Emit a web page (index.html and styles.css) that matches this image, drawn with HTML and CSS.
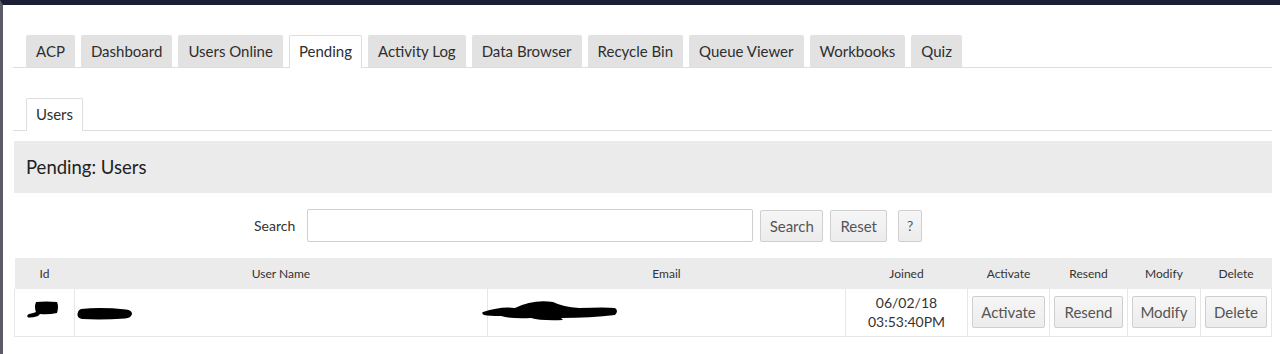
FILE: index.html
```html
<!DOCTYPE html>
<html lang="en">
<head>
<meta charset="utf-8">
<title>ACP - Pending Users</title>
<link rel="stylesheet" href="styles.css">
</head>
<body>
<div class="frame">
  <div class="content">
    <ul class="tabs">
      <li class="tab">ACP</li>
      <li class="tab">Dashboard</li>
      <li class="tab">Users Online</li>
      <li class="tab active">Pending</li>
      <li class="tab">Activity Log</li>
      <li class="tab">Data Browser</li>
      <li class="tab">Recycle Bin</li>
      <li class="tab">Queue Viewer</li>
      <li class="tab">Workbooks</li>
      <li class="tab">Quiz</li>
    </ul>
    <ul class="tabs subtabs">
      <li class="tab active">Users</li>
    </ul>
    <div class="panel-heading">Pending: Users</div>
    <form class="search-row">
      <label class="search-label">Search</label>
      <input class="search-input" type="text">
      <button class="btn btn-search" type="button">Search</button>
      <button class="btn btn-reset" type="button">Reset</button>
      <button class="btn btn-help" type="button">?</button>
    </form>
    <table class="grid">
      <colgroup>
        <col class="c-id"><col class="c-name"><col class="c-email"><col class="c-joined">
        <col class="c-act"><col class="c-resend"><col class="c-mod"><col class="c-del">
      </colgroup>
      <thead>
        <tr><th>Id</th><th>User Name</th><th>Email</th><th>Joined</th><th>Activate</th><th>Resend</th><th>Modify</th><th>Delete</th></tr>
      </thead>
      <tbody>
        <tr>
          <td class="redact-cell">
            <svg class="redact r-id" width="34" height="18" viewBox="0 0 34 18"><path d="M10 1 Q20 0 31 1 Q33 6 31 12 Q22 14 14 13 L12 15 Q6 17 2 16.5 Q0 14.5 3 13 Q8 12 10 11 Q8 6 10 1 Z" fill="#000"/></svg>
          </td>
          <td class="redact-cell">
            <svg class="redact r-name" width="58" height="14" viewBox="0 0 58 14"><path d="M5 2 Q25 0 50 2.5 Q56 3 56 7 Q55 11 49 11.5 Q26 13 6 12 Q1 11 1.5 7 Q2 3 5 2 Z" fill="#000"/></svg>
          </td>
          <td class="redact-cell">
            <svg class="redact r-email" width="138" height="26" viewBox="0 0 138 26"><path d="M2 14 Q20 8 34 10 Q52 1 72 4 Q82 9 98 10 Q125 9 134 10 Q138 13 134 17 Q110 20 80 20 L82 22 Q60 23 50 20 Q30 21 20 18 Q8 18 3 17 Q0 15 2 14 Z" fill="#000"/><path d="M40 12 Q60 6 80 12" stroke="#000" stroke-width="3" fill="none"/></svg>
          </td>
          <td class="joined">06/02/18<br>03:53:40PM</td>
          <td class="act"><button class="btn btn-row" type="button">Activate</button></td>
          <td class="act"><button class="btn btn-row" type="button">Resend</button></td>
          <td class="act"><button class="btn btn-row" type="button">Modify</button></td>
          <td class="act"><button class="btn btn-row" type="button">Delete</button></td>
        </tr>
      </tbody>
    </table>
  </div>
</div>
</body>
</html>
```
FILE: styles.css
```css
* { box-sizing: border-box; }
html, body { margin: 0; padding: 0; background: #fff; }
body {
  font-family: "Lato", "Noto Sans", sans-serif;
  color: #333;
}
.frame {
  border-top: 5px solid #1b1f33;
  border-left: 3px solid #5a5b66;
  height: 354px;
}
.content {
  padding: 30px 8px 0 10px;
}
.tabs {
  list-style: none;
  margin: 0;
  padding: 0 0 0 13px;
  display: flex;
  gap: 6px;
  border-bottom: 1px solid #dedede;
  height: 33px;
}
.tab {
  height: 32px;
  line-height: 32px;
  padding: 0 10px;
  font-size: 15px;
  color: #2e2e2e;
  background: #e2e2e2;
  border-radius: 2px 2px 0 0;
  white-space: nowrap;
}
.tab.active {
  background: #fff;
  border: 1px solid #dedede;
  border-bottom: none;
  height: 33px;
  line-height: 31px;
  padding: 0 9px;
}
.subtabs {
  margin-top: 30px;
}
.panel-heading {
  margin: 10px 0 0 1px;
  height: 52px;
  line-height: 52px;
  background: #ebebeb;
  padding-left: 12px;
  font-size: 18.5px;
  color: #222;
}
.search-row {
  display: flex;
  align-items: center;
  margin: 16px 0 0 0;
  padding-left: 241px;
  height: 33px;
}
.search-label {
  font-size: 14px;
  color: #333;
  margin-right: 12px;
}
.search-input {
  width: 446px;
  height: 33px;
  border: 1px solid #cfcfcf;
  border-radius: 2px;
  margin: 0 7px 0 0;
  background: #fff;
}
.btn {
  font-family: "Lato", "Noto Sans", sans-serif;
  font-size: 15px;
  color: #555;
  background: linear-gradient(#f6f6f6, #ececec);
  border: 1px solid #cfcfcf;
  border-radius: 2px;
  height: 32px;
  padding: 0 8px;
  margin-right: 7px;
  cursor: pointer;
}
.btn-search { width: 63px; padding: 0; }
.btn-reset { width: 57px; padding: 0; margin-right: 11px; }
.btn-help { padding: 0; width: 24px; font-size: 14px; }
.grid {
  margin: 16px 0 0 1px;
  width: 1257px;
  border-collapse: collapse;
  table-layout: fixed;
}
.c-id { width: 60px; }
.c-name { width: 413px; }
.c-email { width: 358px; }
.c-joined { width: 122px; }
.c-act { width: 82px; }
.c-resend { width: 78px; }
.c-mod { width: 73px; }
.c-del { width: 71px; }
.grid th {
  background: #ebebeb;
  height: 31px;
  font-weight: normal;
  font-size: 12px;
  color: #333;
  text-align: center;
  padding: 0;
}
.grid td {
  height: 47px;
  border: 1px solid #e6e6e6;
  border-top: none;
  padding: 0 4px;
  text-align: center;
  vertical-align: middle;
}
.grid td.redact-cell { text-align: left; vertical-align: top; }
.redact { display: block; }
.r-id { margin-left: 7px; margin-top: 12px; }
.r-name { margin-left: -3px; margin-top: 18px; }
.r-email { margin-left: -11px; margin-top: 9px; }
.joined {
  font-size: 14px;
  line-height: 19px;
  color: #333;
}
.act { padding: 0 4px !important; }
.btn-row {
  width: 100%;
  height: 32px;
  margin: 0;
  padding: 0;
}
```
